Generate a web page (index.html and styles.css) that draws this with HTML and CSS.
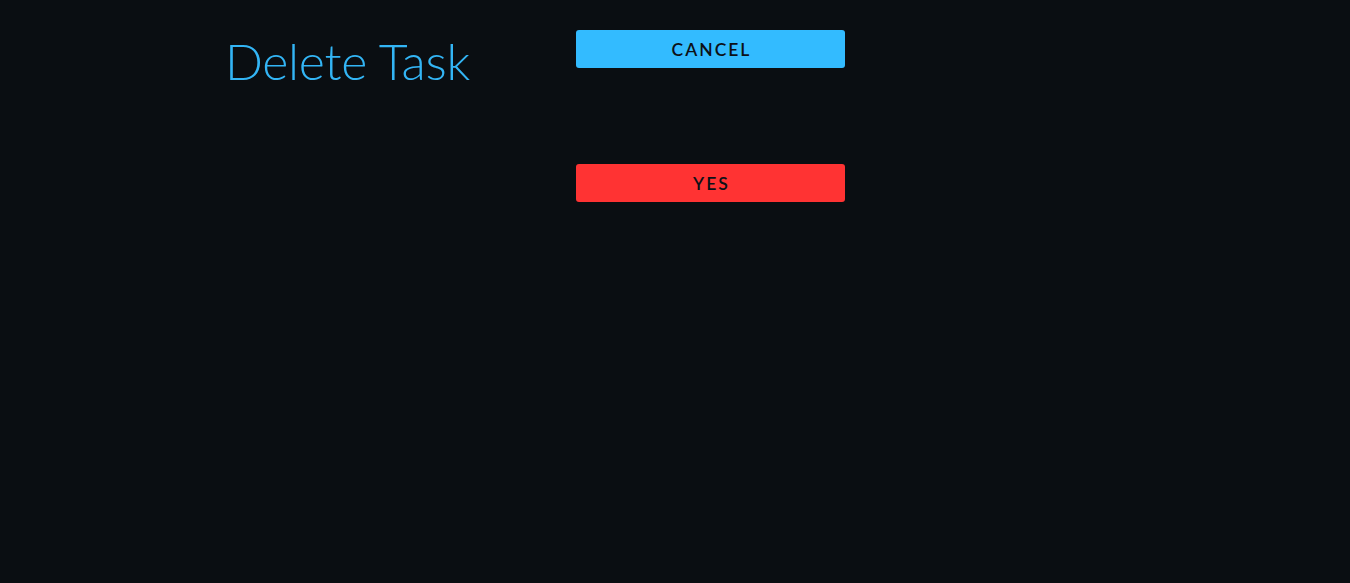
FILE: index.html
```html
<!DOCTYPE html>
<html>
<head>
<meta charset="utf-8">
<link rel="stylesheet" href="styles.css">
</head>
<body>
<main class="dialog">
  <h1 class="title">Delete Task</h1>
  <div class="actions">
    <button class="btn btn-cancel">CANCEL</button>
    <button class="btn btn-yes">YES</button>
  </div>
</main>
</body>
</html>
```
FILE: styles.css
```css
html, body {
  margin: 0;
  padding: 0;
  background: #0a0e12;
  height: 100%;
}
.dialog {
  display: flex;
  align-items: flex-start;
  padding: 30px 0 0 225px;
}
.title {
  margin: 0;
  width: 351px;
  font-family: "Lato", "Liberation Sans", sans-serif;
  font-weight: 300;
  font-size: 50px;
  line-height: 62px;
  color: #33b5f5;
  letter-spacing: -0.3px;
}
.actions {
  display: flex;
  flex-direction: column;
  gap: 96px;
  width: 269px;
}
.btn {
  height: 38px;
  border: none;
  border-radius: 3px;
  font-family: "Lato", "Liberation Sans", sans-serif;
  font-weight: 600;
  font-size: 17.5px;
  letter-spacing: 2px;
  color: #0d1117;
  padding: 0 0 0 2px;
}
.btn-cancel { background: #33bbff; }
.btn-yes { background: #ff3333; }
```
